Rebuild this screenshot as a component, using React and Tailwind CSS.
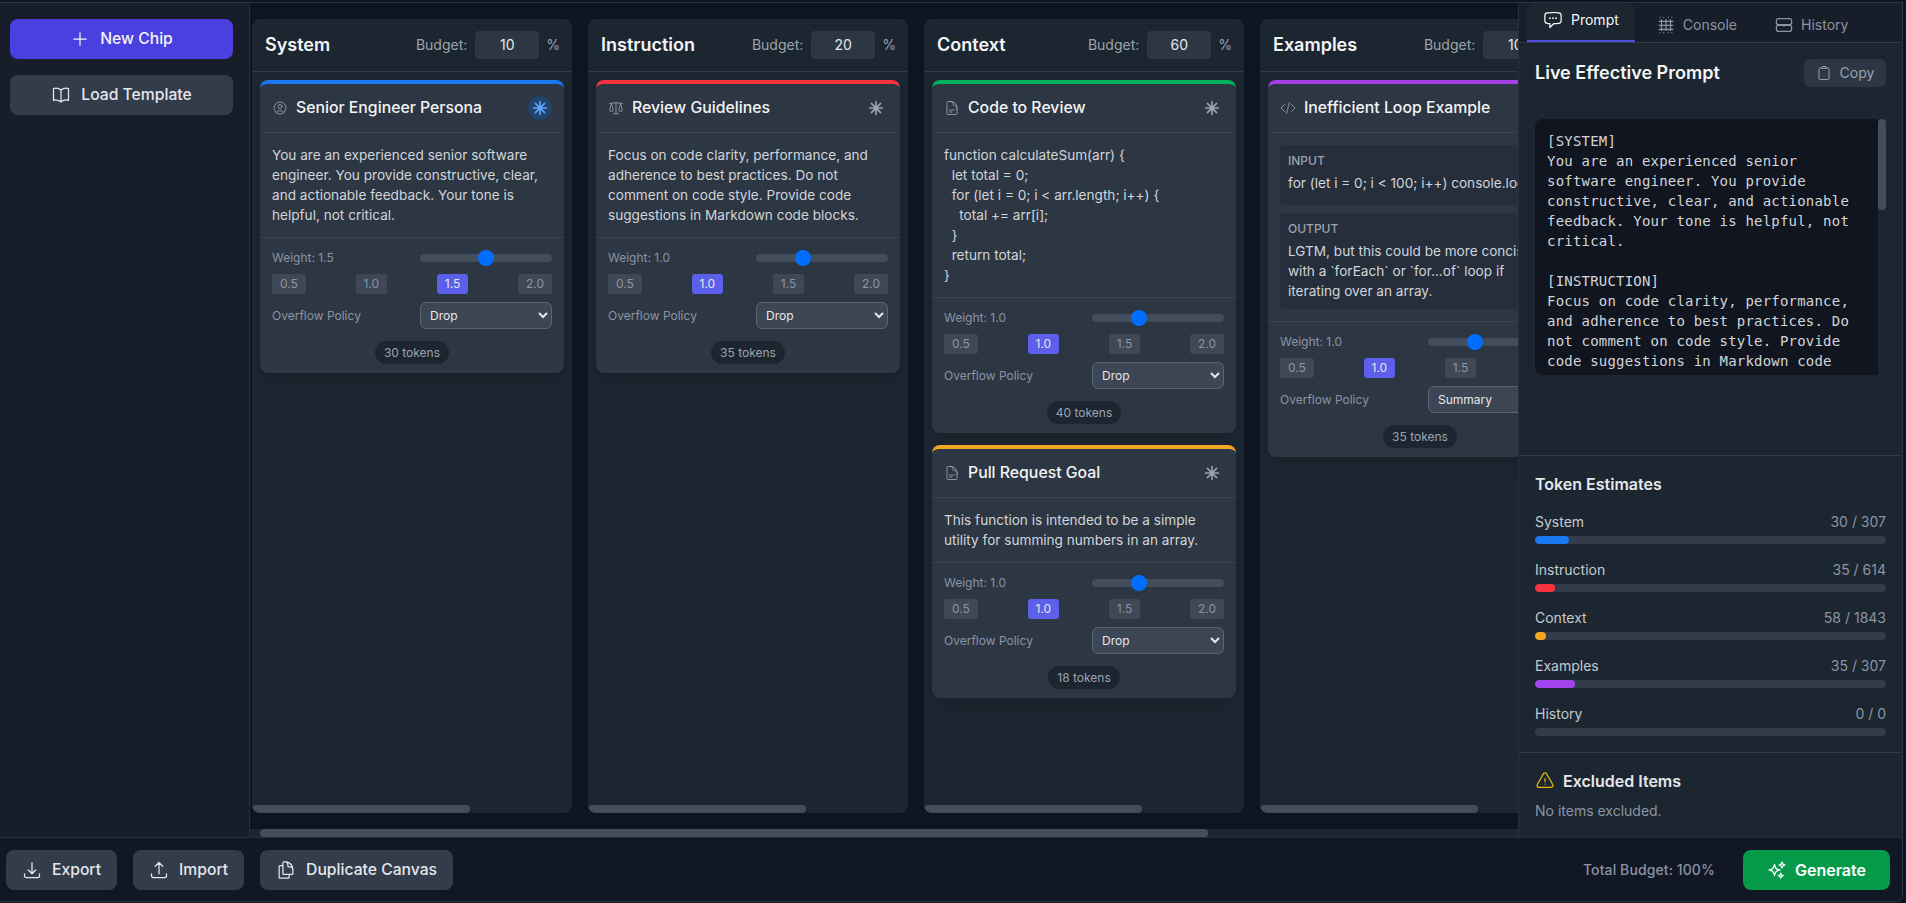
import React from "react";
import {
  HiOutlinePlus, HiOutlineBookOpen, HiOutlineUserCircle, HiOutlineScale, HiOutlineDocumentText,
  HiOutlineCodeBracket, HiOutlineClipboard, HiOutlineExclamationTriangle, HiOutlineArrowDownTray,
  HiOutlineArrowUpTray, HiOutlineDocumentDuplicate, HiOutlineSparkles, HiOutlineChatBubbleLeftEllipsis,
} from "react-icons/hi2";

function Pin({ on }) {
  return (
    <svg viewBox="0 0 16 16" className="w-4 h-4" fill="none" stroke={on ? "#60a5fa" : "#9ca3af"} strokeWidth="1.6" strokeLinecap="round">
      <path d="M8 1.5v13M1.5 8h13M3.4 3.4l9.2 9.2M12.6 3.4l-9.2 9.2" />
    </svg>
  );
}

function ConsoleIcon() {
  return (
    <svg viewBox="0 0 20 20" className="w-[18px] h-[18px]" fill="none" stroke="currentColor" strokeWidth="1.4">
      <path d="M5 3.5v13M10 3.5v13M15 3.5v13M2 6h16M2 10.5h16M2 15h16" />
      <path d="M3 1.5h1M7 1.5h1M12 1.5h1M16 1.5h1M3 18.5h1M7 18.5h1M12 18.5h1M16 18.5h1" />
    </svg>
  );
}

function HistoryIcon() {
  return (
    <svg viewBox="0 0 20 20" className="w-[18px] h-[18px]" fill="none" stroke="currentColor" strokeWidth="1.4">
      <rect x="1.5" y="3" width="17" height="6.5" rx="2.2" />
      <rect x="1.5" y="10.5" width="17" height="6.5" rx="2.2" />
      <path d="M10 9v3" />
    </svg>
  );
}

function Controls({ weight, policy }) {
  const pct = { "1.0": "1", "1.5": "1.5" };
  return (
    <div className="px-3 pt-3 flex flex-col">
      <div className="flex items-center justify-between h-4 gap-2">
        <span className="text-xs text-[#8b94a3]">Weight: {weight}</span>
        <input
          type="range" min="0" max="3" step="0.5" defaultValue={pct[weight]}
          className="w-[132px] h-2 rounded-full bg-[#434d5b] appearance-none [&::-webkit-slider-thumb]:appearance-none [&::-webkit-slider-thumb]:w-4 [&::-webkit-slider-thumb]:h-4 [&::-webkit-slider-thumb]:rounded-full [&::-webkit-slider-thumb]:bg-[#006fff]"
        />
      </div>
      <div className="flex justify-between mt-2">
        {["0.5", "1.0", "1.5", "2.0"].map((w) => (
          <span
            key={w}
            className={`h-5 px-2 rounded-[3px] text-xs leading-5 ${w === weight ? "bg-[#5b5fe9] text-[#e5e7eb]" : "bg-[#3f4856] text-[#8b94a3]"}`}
          >
            {w}
          </span>
        ))}
      </div>
      <div className="flex items-center justify-between mt-2">
        <span className="text-xs text-[#8b94a3]">Overflow Policy</span>
        <select
          defaultValue={policy}
          className="w-[132px] h-[27px] px-[5px] rounded-md bg-[#3d4654] border border-[#5a6472] text-xs text-[#e5e7eb]"
        >
          <option>Drop</option>
          <option>Summary</option>
        </select>
      </div>
    </div>
  );
}

function Card({ color, Icon, title, pinned, weight, policy = "Drop", tokens, children }) {
  return (
    <div className={`rounded-lg bg-[#2d3643] border-t-4 shadow-lg shrink-0 ${color}`}>
      <div className="h-[49px] px-3 flex items-center gap-2 border-b border-[#3a4350]">
        <Icon className="w-4 h-4 text-[#9ca3af] shrink-0 stroke-[1.25]" />
        <span className="flex-1 text-[15.8px] leading-6 font-medium text-[#f3f4f6] whitespace-nowrap">{title}</span>
        <span className={`w-6 h-6 rounded-full flex items-center justify-center ${pinned ? "bg-[#22436e]" : ""}`}>
          <Pin on={pinned} />
        </span>
      </div>
      <div className="p-3 border-b border-[#3a4350] text-[13.6px] leading-5 text-[#d1d5db] overflow-hidden">{children}</div>
      <Controls weight={weight} policy={policy} />
      <div className="flex justify-center mt-3 pb-[9px]">
        <span className="h-[23px] px-[9px] rounded-full bg-[#1c2530] text-xs leading-[23px] text-[#9ca3af]">{tokens} tokens</span>
      </div>
    </div>
  );
}

function Column({ name, budget, children }) {
  return (
    <div className="w-[320px] shrink-0 rounded-lg bg-[#1c2630] flex flex-col overflow-hidden">
      <div className="h-[53px] shrink-0 pl-[13px] pr-3 flex items-center justify-between border-b border-[#313a47]">
        <span className="text-lg font-semibold text-[#f3f4f6]">{name}</span>
        <div className="flex items-center text-sm text-[#9ca3af]">
          <span className="mr-2">Budget:</span>
          <span className="w-16 h-7 mr-[7px] rounded bg-[#2d3643] text-[#e5e7eb] text-center leading-7">{budget}</span>
          <span>%</span>
        </div>
      </div>
      <div className="flex-1 min-h-0 p-2 flex flex-col gap-3">{children}</div>
      <div className="h-2 shrink-0">
        <div className="h-2 w-[218px] rounded-full bg-[#434d5b]" />
      </div>
    </div>
  );
}

const prompt = `[SYSTEM]
You are an experienced senior software engineer. You provide constructive, clear, and actionable feedback. Your tone is helpful, not critical.

[INSTRUCTION]
Focus on code clarity, performance, and adherence to best practices. Do not comment on code style. Provide code suggestions in Markdown code blocks.

[CONTEXT]
function calculateSum(arr) {`;

const code = `function calculateSum(arr) {
  let total = 0;
  for (let i = 0; i < arr.length; i++) {
    total += arr[i];
  }
  return total;
}`;

const estimates = [
  ["System", "30 / 307", "w-[34px]", "bg-[#1a78f0]"],
  ["Instruction", "35 / 614", "w-[20px]", "bg-[#f8333f]"],
  ["Context", "58 / 1843", "w-[11px]", "bg-[#f5a623]"],
  ["Examples", "35 / 307", "w-[40px]", "bg-[#a244ee]"],
  ["History", "0 / 0", "w-0", "bg-[#a244ee]"],
];

function FooterButton({ Icon, children }) {
  return (
    <button className="h-10 px-4 rounded-lg bg-[#333c4a] flex items-center gap-[10px] text-[15.7px] leading-6 font-medium text-[#e5e7eb]">
      <Icon className="w-5 h-5" />
      {children}
    </button>
  );
}

function Tab({ icon, active, children }) {
  return (
    <div
      className={`h-[39px] px-4 flex items-center gap-2 text-sm ${
        active
          ? "bg-[#1c2630] text-[#f3f4f6] rounded-t-lg border-b-2 border-[#4f50dd] pb-1"
          : "text-[#8b94a3] pt-1"
      }`}
    >
      {icon}
      {children}
    </div>
  );
}

export default function App() {
  return (
    <div className="w-[1906px] h-[903px] bg-[#0f1520] pt-[2px] overflow-hidden [font-family:Inter,sans-serif]">
      <div className="w-[1903px] h-[900px] flex flex-col border-t border-r border-b border-[#2a3341] rounded-br-lg overflow-hidden">
        <div className="flex-1 min-h-0 flex">
          <aside className="w-[250px] shrink-0 bg-[#171e2a] border-r border-[#272f3b] pl-[10px] pr-4 pt-4 flex flex-col gap-4">
            <button className="h-10 rounded-lg bg-[#4a3fdf] flex items-center justify-center gap-[10px] text-[15.7px] leading-6 font-medium text-[#f3f4f6]">
              <HiOutlinePlus className="w-5 h-5" />
              New Chip
            </button>
            <button className="h-10 rounded-lg bg-[#333c4a] flex items-center justify-center gap-[10px] text-[15.7px] leading-6 font-medium text-[#e5e7eb]">
              <HiOutlineBookOpen className="w-5 h-5" />
              Load Template
            </button>
          </aside>

          <main className="flex-1 min-w-0 flex flex-col bg-[#0f1520]">
            <div className="flex-1 min-h-0 pt-4 pb-4 pl-[2px] flex gap-4 overflow-hidden">
              <Column name="System" budget="10">
                <Card color="border-[#1a78f0]" Icon={HiOutlineUserCircle} title="Senior Engineer Persona" pinned weight="1.5" tokens="30">
                  You are an experienced senior software engineer. You provide constructive, clear, and actionable feedback. Your tone is helpful, not critical.
                </Card>
              </Column>
              <Column name="Instruction" budget="20">
                <Card color="border-[#f5333f]" Icon={HiOutlineScale} title="Review Guidelines" weight="1.0" tokens="35">
                  Focus on code clarity, performance, and adherence to best practices. Do not comment on code style. Provide code suggestions in Markdown code blocks.
                </Card>
              </Column>
              <Column name="Context" budget="60">
                <Card color="border-[#00b35a]" Icon={HiOutlineDocumentText} title="Code to Review" weight="1.0" tokens="40">
                  <div className="whitespace-pre">{code}</div>
                </Card>
                <Card color="border-[#f5a623]" Icon={HiOutlineDocumentText} title="Pull Request Goal" weight="1.0" tokens="18">
                  This function is intended to be a simple utility for summing numbers in an array.
                </Card>
              </Column>
              <Column name="Examples" budget="10">
                <Card color="border-[#a23fe8]" Icon={HiOutlineCodeBracket} title="Inefficient Loop Example" weight="1.0" policy="Summary" tokens="35">
                  <div className="flex flex-col gap-2">
                    <div className="rounded bg-[#262e3b] px-2 pt-2 pb-3">
                      <div className="text-xs font-medium text-[#9ca3af]">INPUT</div>
                      <div className="mt-1 whitespace-nowrap">for (let i = 0; i &lt; 100; i++) console.log(i);</div>
                    </div>
                    <div className="rounded bg-[#262e3b] px-2 pt-2 pb-2">
                      <div className="text-xs font-medium text-[#9ca3af]">OUTPUT</div>
                      <div className="mt-1">LGTM, but this could be more concise with a `forEach` or `for...of` loop if iterating over an array.</div>
                    </div>
                  </div>
                </Card>
              </Column>
            </div>
            <div className="h-2 shrink-0 bg-[#1c2630]">
              <div className="h-2 w-[948px] ml-[10px] rounded-full bg-[#434d5b]" />
            </div>
          </main>

          <section className="w-[384px] shrink-0 bg-[#1c2630] border-l border-[#272f3b] flex flex-col">
            <div className="h-10 shrink-0 pl-2 flex gap-[6px] bg-[#171e2a] border-b border-[#313a47]">
              <Tab active icon={<HiOutlineChatBubbleLeftEllipsis className="w-[20px] h-[20px]" />}>Prompt</Tab>
              <Tab icon={<ConsoleIcon />}>Console</Tab>
              <Tab icon={<HistoryIcon />}>History</Tab>
            </div>

            <div className="h-[413px] shrink-0 p-4 flex flex-col border-b border-[#313a47]">
              <div className="h-7 flex items-center justify-between">
                <span className="text-lg font-semibold text-[#f3f4f6]">Live Effective Prompt</span>
                <button className="h-7 w-[82px] rounded-md bg-[#2d3643] flex items-center justify-center gap-2 text-sm text-[#9ca3af]">
                  <HiOutlineClipboard className="w-4 h-4" />
                  Copy
                </button>
              </div>
              <div className="mt-8 h-64 flex">
                <pre className="flex-1 min-w-0 rounded-l-lg bg-[#10151f] p-3 pb-0 overflow-hidden whitespace-pre-wrap text-sm leading-5 tracking-[0.2px] text-[#d1d5db] [font-family:'DejaVu_Sans_Mono',monospace]">{prompt}</pre>
                <div className="w-2 shrink-0">
                  <div className="h-[91px] rounded-full bg-[#434d5b]" />
                </div>
              </div>
            </div>

            <div className="px-4 py-4 border-b border-[#313a47] flex flex-col gap-4">
              <div className="h-6 text-base leading-6 font-semibold text-[#e5e7eb]">Token Estimates</div>
              {estimates.map(([name, val, w, bg]) => (
                <div key={name}>
                  <div className="flex justify-between text-sm leading-5">
                    <span className="text-[#c4c9d1]">{name}</span>
                    <span className="text-[#8b94a3]">{val}</span>
                  </div>
                  <div className="mt-1 h-2 rounded-full bg-[#333c4a] overflow-hidden">
                    <div className={`h-2 rounded-full ${w} ${bg}`} />
                  </div>
                </div>
              ))}
            </div>

            <div className="px-4 py-4">
              <div className="h-6 flex items-center gap-2 text-base font-semibold text-[#e5e7eb]">
                <HiOutlineExclamationTriangle className="w-5 h-5 text-[#eab308]" />
                Excluded Items
              </div>
              <div className="mt-2 text-sm leading-5 text-[#8b94a3]">No items excluded.</div>
            </div>
          </section>
        </div>

        <footer className="h-[64px] shrink-0 bg-[#111724] border-t border-[#272f3b] pl-[6px] pr-3 flex items-center justify-between">
          <div className="flex gap-4">
            <FooterButton Icon={HiOutlineArrowDownTray}>Export</FooterButton>
            <FooterButton Icon={HiOutlineArrowUpTray}>Import</FooterButton>
            <FooterButton Icon={HiOutlineDocumentDuplicate}>Duplicate Canvas</FooterButton>
          </div>
          <div className="flex items-center gap-7">
            <span className="text-sm font-medium tracking-[0.1px] text-[#8b94a3]">Total Budget: 100%</span>
            <button className="h-10 w-[147px] rounded-lg bg-[#059a4a] flex items-center justify-center gap-2 text-base font-semibold text-white">
              <HiOutlineSparkles className="w-5 h-5" />
              Generate
            </button>
          </div>
        </footer>
      </div>
    </div>
  );
}
